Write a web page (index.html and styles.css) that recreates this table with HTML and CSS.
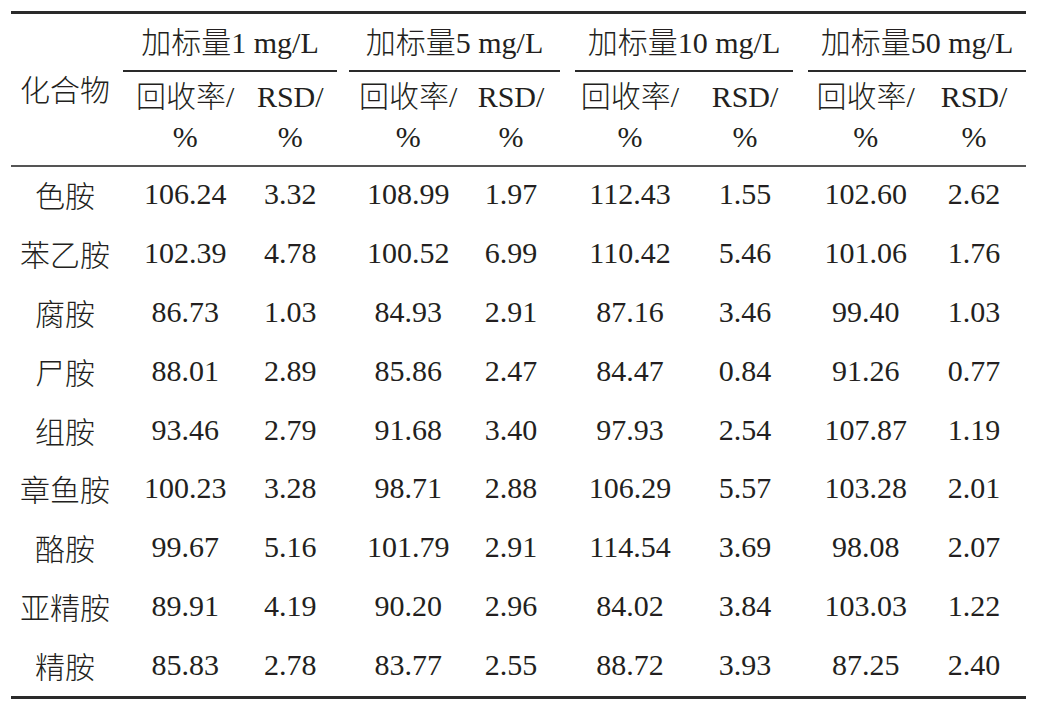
FILE: index.html
```html
<!DOCTYPE html>
<html lang="zh">
<head>
<meta charset="utf-8">
<title>加标回收率</title>
<link rel="stylesheet" href="styles.css">
</head>
<body>
<div class="tbl">
  <div class="head">
    <div class="name">化合物</div>
    <div class="grp g1">加标量1 mg/L</div>
    <div class="grp g2">加标量5 mg/L</div>
    <div class="grp g3">加标量10 mg/L</div>
    <div class="grp g4">加标量50 mg/L</div>
    <div class="sub c1">回收率/<br>%</div>
    <div class="sub c2">RSD/<br>%</div>
    <div class="sub c3">回收率/<br>%</div>
    <div class="sub c4">RSD/<br>%</div>
    <div class="sub c5">回收率/<br>%</div>
    <div class="sub c6">RSD/<br>%</div>
    <div class="sub c7">回收率/<br>%</div>
    <div class="sub c8">RSD/<br>%</div>
  </div>
  <div class="body">
    <div>色胺</div><div>106.24</div><div>3.32</div><div>108.99</div><div>1.97</div><div>112.43</div><div>1.55</div><div>102.60</div><div>2.62</div>
    <div>苯乙胺</div><div>102.39</div><div>4.78</div><div>100.52</div><div>6.99</div><div>110.42</div><div>5.46</div><div>101.06</div><div>1.76</div>
    <div>腐胺</div><div>86.73</div><div>1.03</div><div>84.93</div><div>2.91</div><div>87.16</div><div>3.46</div><div>99.40</div><div>1.03</div>
    <div>尸胺</div><div>88.01</div><div>2.89</div><div>85.86</div><div>2.47</div><div>84.47</div><div>0.84</div><div>91.26</div><div>0.77</div>
    <div>组胺</div><div>93.46</div><div>2.79</div><div>91.68</div><div>3.40</div><div>97.93</div><div>2.54</div><div>107.87</div><div>1.19</div>
    <div>章鱼胺</div><div>100.23</div><div>3.28</div><div>98.71</div><div>2.88</div><div>106.29</div><div>5.57</div><div>103.28</div><div>2.01</div>
    <div>酪胺</div><div>99.67</div><div>5.16</div><div>101.79</div><div>2.91</div><div>114.54</div><div>3.69</div><div>98.08</div><div>2.07</div>
    <div>亚精胺</div><div>89.91</div><div>4.19</div><div>90.20</div><div>2.96</div><div>84.02</div><div>3.84</div><div>103.03</div><div>1.22</div>
    <div>精胺</div><div>85.83</div><div>2.78</div><div>83.77</div><div>2.55</div><div>88.72</div><div>3.93</div><div>87.25</div><div>2.40</div>
  </div>
</div>
</body>
</html>
```
FILE: styles.css
```css
html, body {
  margin: 0;
  padding: 0;
  background: #ffffff;
}

body {
  font-family: "Liberation Serif", "Noto Sans CJK SC", serif;
  font-size: 30px;
  font-weight: 300;
  color: #231f20;
}

.tbl {
  --cols: 114px 112.5px 111.5px 110.5px 111px 117px 118px 114.5px 106px;
  width: 1015px;
  margin: 11px 0 0 11px;
  border-top: 3px solid #2a2a2a;
  border-bottom: 3px solid #2a2a2a;
}

.head {
  display: grid;
  grid-template-columns: var(--cols);
  grid-template-rows: 58px 93px;
  border-bottom: 2px solid #555555;
}

.head > div {
  display: flex;
  align-items: center;
  justify-content: center;
  text-align: center;
}

.name {
  grid-column: 1;
  grid-row: 1 / span 2;
  padding-right: 6px;
  padding-bottom: 3px;
}

.grp {
  grid-row: 1;
  border-bottom: 2px solid #2a2a2a;
  white-space: nowrap;
  padding-bottom: 5px;
}

.g1 { grid-column: 2 / span 2; margin: 0 12px 0 -2px; }
.g2 { grid-column: 4 / span 2; margin: 0 10.5px 0 0; }
.g3 { grid-column: 6 / span 2; margin: 0 12.5px 0 4.5px; }
.g4 { grid-column: 8 / span 2; margin: 0 0 0 2.5px; }

.sub {
  grid-row: 2;
  line-height: 40px;
  white-space: nowrap;
  padding-bottom: 3px;
}

.c1 { grid-column: 2; padding-left: 8px; }
.c2 { grid-column: 3; padding-right: 6px; }
.c3 { grid-column: 4; padding-left: 8px; }
.c4 { grid-column: 5; padding-right: 8px; }
.c5 { grid-column: 6; padding-left: 2px; }
.c6 { grid-column: 7; padding-right: 3px; }
.c7 { grid-column: 8; padding-left: 6px; }
.c8 { grid-column: 9; padding-left: 2px; }

.body {
  display: grid;
  grid-template-columns: var(--cols);
  grid-auto-rows: 58.8px;
}

.body > div {
  display: flex;
  align-items: center;
  justify-content: center;
  white-space: nowrap;
  padding-bottom: 4px;
}

.body > div:nth-child(9n+1) { padding-right: 6px; }
.body > div:nth-child(9n+2) { padding-left: 8px; }
.body > div:nth-child(9n+3) { padding-right: 6px; }
.body > div:nth-child(9n+4) { padding-left: 8px; }
.body > div:nth-child(9n+5) { padding-right: 8px; }
.body > div:nth-child(9n+6) { padding-left: 2px; }
.body > div:nth-child(9n+7) { padding-right: 3px; }
.body > div:nth-child(9n+8) { padding-left: 6px; }
.body > div:nth-child(9n+9) { padding-left: 2px; }
```
